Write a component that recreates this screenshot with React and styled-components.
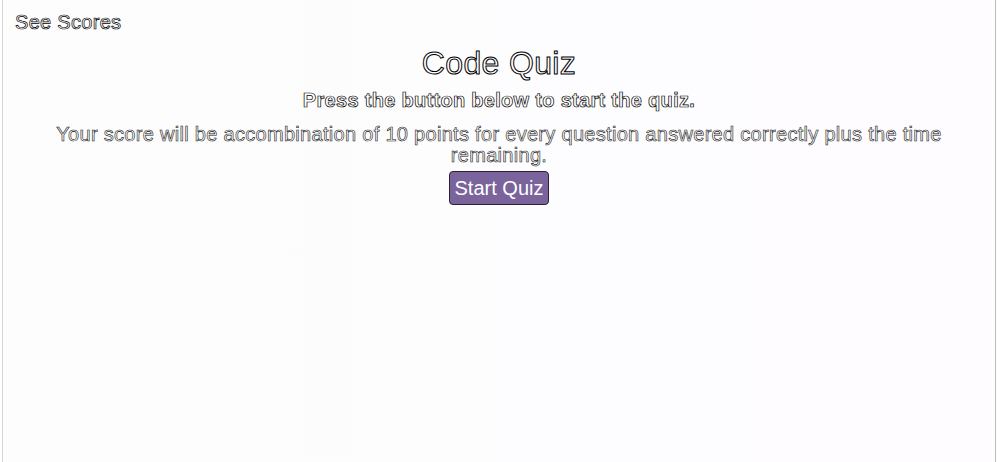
import React from "react";
import styled, { createGlobalStyle } from "styled-components";

const Global = createGlobalStyle`
  html, body { margin: 0; padding: 0; height: 100%; }
  body {
    font-family: "Liberation Sans", Arial, sans-serif;
    background: #fff;
    -webkit-font-smoothing: antialiased;
  }
  #root { height: 100%; }
`;

const Frame = styled.div`
  box-sizing: border-box;
  height: 462px;
  margin: 0 2px;
  border-left: 1px solid #d6d6d6;
  border-right: 1px solid #bdbdbd;
  background: linear-gradient(90deg, #fdfdfd 0%, #fefcff 100%);
  padding: 10px 12px;
  display: flex;
  flex-direction: column;
`;

const outline = `
  color: #fff;
  -webkit-text-stroke: 0.7px #000;
  letter-spacing: 0.3px;
`;

const TopLink = styled.a`
  font-size: 20px;
  line-height: 24px;
  ${outline}
  cursor: pointer;
  align-self: flex-start;
`;

const Main = styled.main`
  display: flex;
  flex-direction: column;
  align-items: center;
  text-align: center;
`;

const Title = styled.h1`
  margin: 10px 0 0;
  font-size: 32px;
  line-height: 38px;
  font-weight: 400;
  ${outline}
  -webkit-text-stroke: 1px #000;
  letter-spacing: 0.35px;
`;

const Lead = styled.h3`
  margin: 6px 0 0;
  font-size: 20px;
  line-height: 24px;
  font-weight: 700;
  ${outline}
`;

const Text = styled.p`
  margin: 12px 0 0;
  width: 95%;
  font-size: 20px;
  line-height: 21px;
  ${outline}
  -webkit-text-stroke: 0.6px #111;
`;

const Button = styled.button`
  margin-top: 5px;
  font-family: "Liberation Sans", Arial, sans-serif;
  font-size: 20px;
  line-height: 24px;
  color: #fff;
  background: #7b639c;
  border: 1px solid #2b2233;
  border-radius: 4px;
  padding: 4px 5px;
  cursor: pointer;
`;

export default function App() {
  return (
    <>
      <Global />
      <Frame>
        <TopLink>See Scores</TopLink>
        <Main>
          <Title>Code Quiz</Title>
          <Lead>Press the button below to start the quiz.</Lead>
          <Text>
            Your score will be accombination of 10 points for every question answered correctly plus the time remaining.
          </Text>
          <Button>Start Quiz</Button>
        </Main>
      </Frame>
    </>
  );
}
